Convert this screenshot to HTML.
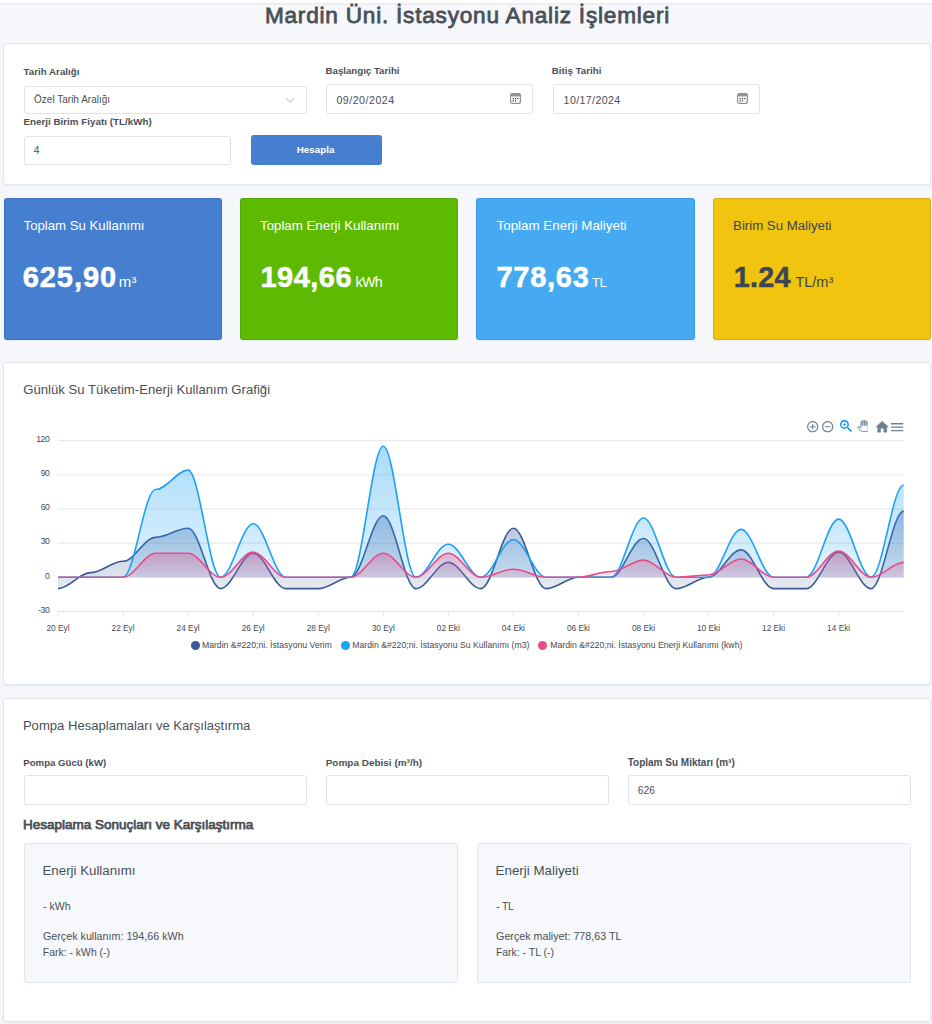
<!DOCTYPE html>
<html lang="tr">
<head>
<meta charset="utf-8">
<title>Mardin Üni. İstasyonu Analiz İşlemleri</title>
<style>
*{box-sizing:border-box;margin:0;padding:0}
html,body{width:932px;height:1024px;overflow:hidden}
body{background:#f5f7fb;font-family:"Liberation Sans",sans-serif;color:#495057;position:relative}
.topbar{position:absolute;left:0;top:0;width:932px;height:5px;background:#fff;border-bottom:2px solid #ebeef4}
.t{position:absolute;white-space:pre}
.card{position:absolute;background:#fff;border:1px solid #e1e5ec;border-radius:3px;box-shadow:0 1px 2px rgba(0,0,0,.05)}
.inp{position:absolute;background:#fff;border:1px solid #dfe3ea;border-radius:3px}
.sub{position:absolute;background:#f7f8fb;border:1px solid #e1e5ec;border-radius:3px}
.btn{position:absolute;background:#467fcf;border-radius:3px}
.stat{position:absolute;border-radius:3px;border:1px solid rgba(0,40,100,.12);box-shadow:0 1px 2px rgba(0,0,0,.05)}
svg{position:absolute;overflow:visible}
</style>
</head>
<body>
<div class="topbar"></div>
<div class="t" style="left:264.90px;top:6.27px;font-size:22.6px;line-height:20px;color:#495057;letter-spacing:0.78px;-webkit-text-stroke:0.8px #495057;">Mardin Üni. İstasyonu Analiz İşlemleri</div>
<div class="card" style="left:3px;top:43px;width:928px;height:142px;"></div>
<div class="t" style="left:23.60px;top:61.62px;font-size:9.75px;line-height:20px;color:#495057;font-weight:bold;">Tarih Aralığı</div>
<div class="inp" style="left:24px;top:86px;width:283px;height:28px;"></div>
<div class="t" style="left:34.10px;top:89.83px;font-size:10.0px;line-height:20px;color:#495057;">Özel Tarih Aralığı</div>
<svg style="left:285px;top:97px" width="10" height="7" viewBox="0 0 10 7"><path d="M1.2 1.4 L5 5.2 L8.8 1.4" fill="none" stroke="#c3c7cd" stroke-width="1.2"/></svg>
<div class="t" style="left:325.60px;top:61.05px;font-size:9.67px;line-height:20px;color:#495057;font-weight:bold;">Başlangıç Tarihi</div>
<div class="inp" style="left:326px;top:84px;width:207px;height:30px;"></div>
<div class="t" style="left:336.40px;top:89.73px;font-size:10.6px;line-height:20px;color:#495057;letter-spacing:0.52px;">09/20/2024</div>
<div class="t" style="left:551.70px;top:61.01px;font-size:9.78px;line-height:20px;color:#495057;font-weight:bold;">Bitiş Tarihi</div>
<div class="inp" style="left:553px;top:84px;width:207px;height:30px;"></div>
<div class="t" style="left:563.60px;top:89.73px;font-size:10.6px;line-height:20px;color:#495057;letter-spacing:0.4px;">10/17/2024</div>
<svg style="left:510px;top:93px" width="11" height="11" viewBox="0 0 11 11"><rect x="0.6" y="0.6" width="9.8" height="9.8" rx="2" fill="#fff" stroke="#8f8f8f" stroke-width="1.2"/><rect x="0.6" y="0.6" width="9.8" height="2.8" rx="1.5" fill="#919191"/><g fill="#333"><rect x="2.6" y="5" width="1.2" height="1.2"/><rect x="4.9" y="5" width="1.2" height="1.2"/><rect x="7.2" y="5" width="1.2" height="1.2"/><rect x="2.6" y="7.2" width="1.2" height="1.2"/><rect x="4.9" y="7.2" width="1.2" height="1.2"/></g></svg>
<svg style="left:737px;top:93px" width="11" height="11" viewBox="0 0 11 11"><rect x="0.6" y="0.6" width="9.8" height="9.8" rx="2" fill="#fff" stroke="#8f8f8f" stroke-width="1.2"/><rect x="0.6" y="0.6" width="9.8" height="2.8" rx="1.5" fill="#919191"/><g fill="#333"><rect x="2.6" y="5" width="1.2" height="1.2"/><rect x="4.9" y="5" width="1.2" height="1.2"/><rect x="7.2" y="5" width="1.2" height="1.2"/><rect x="2.6" y="7.2" width="1.2" height="1.2"/><rect x="4.9" y="7.2" width="1.2" height="1.2"/></g></svg>
<div class="t" style="left:23.40px;top:112.19px;font-size:9.83px;line-height:20px;color:#495057;font-weight:bold;">Enerji Birim Fiyatı (TL/kWh)</div>
<div class="inp" style="left:24px;top:136px;width:207px;height:29px;"></div>
<div class="t" style="left:33.70px;top:140.73px;font-size:10.3px;line-height:20px;color:#495057;">4</div>
<div class="btn" style="left:250.5px;top:135px;width:131.5px;height:30px;"></div>
<div class="t" style="left:296.80px;top:140.20px;font-size:9.8px;line-height:20px;color:#fff;font-weight:bold;">Hesapla</div>
<div class="stat" style="left:4px;top:198px;width:218px;height:142px;background:#467fcf;"></div>
<div class="t" style="left:23.60px;top:216.03px;font-size:13.19px;line-height:20px;color:#fff;">Toplam Su Kullanımı</div>
<div class="t" style="left:22.70px;top:267.25px;font-size:29.0px;line-height:20px;color:#fff;font-weight:bold;letter-spacing:0.95px;-webkit-text-stroke:0.5px #fff;">625,90</div>
<div class="t" style="left:118.80px;top:272.10px;font-size:15.0px;line-height:20px;color:#fff;letter-spacing:0.1px;">m³</div>
<div class="stat" style="left:240px;top:198px;width:218px;height:142px;background:#5eba00;"></div>
<div class="t" style="left:260.00px;top:216.00px;font-size:13.29px;line-height:20px;color:#fff;">Toplam Enerji Kullanımı</div>
<div class="t" style="left:260.40px;top:267.25px;font-size:29.0px;line-height:20px;color:#fff;font-weight:bold;letter-spacing:0.5px;-webkit-text-stroke:0.5px #fff;">194,66</div>
<div class="t" style="left:355.40px;top:272.31px;font-size:14.4px;line-height:20px;color:#fff;letter-spacing:-0.7px;">kWh</div>
<div class="stat" style="left:476px;top:198px;width:219px;height:142px;background:#45aaf2;"></div>
<div class="t" style="left:496.50px;top:215.96px;font-size:13.38px;line-height:20px;color:#fff;">Toplam Enerji Maliyeti</div>
<div class="t" style="left:496.40px;top:267.25px;font-size:29.0px;line-height:20px;color:#fff;font-weight:bold;letter-spacing:0.75px;-webkit-text-stroke:0.5px #fff;">778,63</div>
<div class="t" style="left:591.80px;top:272.59px;font-size:13.6px;line-height:20px;color:#fff;letter-spacing:-0.5px;">TL</div>
<div class="stat" style="left:713px;top:198px;width:218px;height:142px;background:#f1c40f;"></div>
<div class="t" style="left:733.10px;top:216.02px;font-size:13.22px;line-height:20px;color:#3d4552;">Birim Su Maliyeti</div>
<div class="t" style="left:733.80px;top:267.36px;font-size:28.7px;line-height:20px;color:#3d4552;font-weight:bold;letter-spacing:0.3px;-webkit-text-stroke:0.5px #3d4552;">1.24</div>
<div class="t" style="left:795.40px;top:272.28px;font-size:14.5px;line-height:20px;color:#3d4552;">TL/m³</div>
<div class="card" style="left:3px;top:362px;width:928px;height:323px;"></div>
<div class="t" style="left:23.20px;top:379.74px;font-size:13.17px;line-height:20px;color:#495057;">Günlük Su Tüketim-Enerji Kullanım Grafiği</div>
<svg style="left:0;top:0" width="932" height="1024" viewBox="0 0 932 1024">
<defs>
<linearGradient id="g_verim" gradientUnits="userSpaceOnUse" x1="0" y1="511.2" x2="0" y2="588.6"><stop offset="0" stop-color="#3b5998" stop-opacity="0.38"/><stop offset="1" stop-color="#3b5998" stop-opacity="0.13"/></linearGradient>
<linearGradient id="g_water" gradientUnits="userSpaceOnUse" x1="0" y1="446.2" x2="0" y2="577.2"><stop offset="0" stop-color="#1da1f2" stop-opacity="0.38"/><stop offset="1" stop-color="#1da1f2" stop-opacity="0.13"/></linearGradient>
<linearGradient id="g_energy" gradientUnits="userSpaceOnUse" x1="0" y1="551.0" x2="0" y2="577.2"><stop offset="0" stop-color="#ea4c89" stop-opacity="0.38"/><stop offset="1" stop-color="#ea4c89" stop-opacity="0.13"/></linearGradient>
</defs>
<line x1="58.0" x2="903.8" y1="440.55" y2="440.55" stroke="#eaeaea" stroke-width="1.15"/>
<line x1="58.0" x2="903.8" y1="474.72" y2="474.72" stroke="#eaeaea" stroke-width="1.15"/>
<line x1="58.0" x2="903.8" y1="508.89" y2="508.89" stroke="#eaeaea" stroke-width="1.15"/>
<line x1="58.0" x2="903.8" y1="543.06" y2="543.06" stroke="#eaeaea" stroke-width="1.15"/>
<line x1="58.0" x2="903.8" y1="577.23" y2="577.23" stroke="#eaeaea" stroke-width="1.15"/>
<line x1="58.0" x2="903.8" y1="611.4" y2="611.4" stroke="#e0e0e0" stroke-width="1"/>
<line x1="58.0" x2="58.0" y1="611.40" y2="616.70" stroke="#e6e6e6" stroke-width="1"/>
<line x1="123.054" x2="123.054" y1="611.40" y2="616.70" stroke="#e6e6e6" stroke-width="1"/>
<line x1="188.108" x2="188.108" y1="611.40" y2="616.70" stroke="#e6e6e6" stroke-width="1"/>
<line x1="253.162" x2="253.162" y1="611.40" y2="616.70" stroke="#e6e6e6" stroke-width="1"/>
<line x1="318.216" x2="318.216" y1="611.40" y2="616.70" stroke="#e6e6e6" stroke-width="1"/>
<line x1="383.27" x2="383.27" y1="611.40" y2="616.70" stroke="#e6e6e6" stroke-width="1"/>
<line x1="448.324" x2="448.324" y1="611.40" y2="616.70" stroke="#e6e6e6" stroke-width="1"/>
<line x1="513.378" x2="513.378" y1="611.40" y2="616.70" stroke="#e6e6e6" stroke-width="1"/>
<line x1="578.432" x2="578.432" y1="611.40" y2="616.70" stroke="#e6e6e6" stroke-width="1"/>
<line x1="643.486" x2="643.486" y1="611.40" y2="616.70" stroke="#e6e6e6" stroke-width="1"/>
<line x1="708.54" x2="708.54" y1="611.40" y2="616.70" stroke="#e6e6e6" stroke-width="1"/>
<line x1="773.594" x2="773.594" y1="611.40" y2="616.70" stroke="#e6e6e6" stroke-width="1"/>
<line x1="838.648" x2="838.648" y1="611.40" y2="616.70" stroke="#e6e6e6" stroke-width="1"/>
<path d="M58.00 588.62C69.38 588.62 79.14 572.67 90.53 572.67C101.91 572.67 111.67 561.28 123.05 561.28C134.44 561.28 144.20 537.37 155.58 537.37C166.97 537.37 176.72 528.25 188.11 528.25C199.49 528.25 209.25 588.62 220.63 588.62C232.02 588.62 241.78 553.31 253.16 553.31C264.55 553.31 274.30 588.62 285.69 588.62C297.07 588.62 306.83 588.62 318.22 588.62C329.60 588.62 339.36 577.23 350.74 577.23C362.13 577.23 371.89 515.72 383.27 515.72C394.65 515.72 404.41 588.62 415.80 588.62C427.18 588.62 436.94 562.42 448.32 562.42C459.71 562.42 469.47 588.62 480.85 588.62C492.24 588.62 501.99 528.25 513.38 528.25C524.76 528.25 534.52 588.62 545.90 588.62C557.29 588.62 567.05 577.23 578.43 577.23C589.82 577.23 599.57 577.23 610.96 577.23C622.34 577.23 632.10 538.50 643.49 538.50C654.87 538.50 664.63 588.62 676.01 588.62C687.40 588.62 697.16 577.23 708.54 577.23C719.92 577.23 729.68 549.89 741.07 549.89C752.45 549.89 762.21 588.62 773.59 588.62C784.98 588.62 794.74 588.62 806.12 588.62C817.51 588.62 827.26 552.17 838.65 552.17C850.03 552.17 859.79 588.62 871.18 588.62C882.56 588.62 892.32 511.17 903.70 511.17L903.70 577.23L58.00 577.23Z" fill="url(#g_verim)" stroke="none"/>
<path d="M58.00 588.62C69.38 588.62 79.14 572.67 90.53 572.67C101.91 572.67 111.67 561.28 123.05 561.28C134.44 561.28 144.20 537.37 155.58 537.37C166.97 537.37 176.72 528.25 188.11 528.25C199.49 528.25 209.25 588.62 220.63 588.62C232.02 588.62 241.78 553.31 253.16 553.31C264.55 553.31 274.30 588.62 285.69 588.62C297.07 588.62 306.83 588.62 318.22 588.62C329.60 588.62 339.36 577.23 350.74 577.23C362.13 577.23 371.89 515.72 383.27 515.72C394.65 515.72 404.41 588.62 415.80 588.62C427.18 588.62 436.94 562.42 448.32 562.42C459.71 562.42 469.47 588.62 480.85 588.62C492.24 588.62 501.99 528.25 513.38 528.25C524.76 528.25 534.52 588.62 545.90 588.62C557.29 588.62 567.05 577.23 578.43 577.23C589.82 577.23 599.57 577.23 610.96 577.23C622.34 577.23 632.10 538.50 643.49 538.50C654.87 538.50 664.63 588.62 676.01 588.62C687.40 588.62 697.16 577.23 708.54 577.23C719.92 577.23 729.68 549.89 741.07 549.89C752.45 549.89 762.21 588.62 773.59 588.62C784.98 588.62 794.74 588.62 806.12 588.62C817.51 588.62 827.26 552.17 838.65 552.17C850.03 552.17 859.79 588.62 871.18 588.62C882.56 588.62 892.32 511.17 903.70 511.17" fill="none" stroke="#3b5998" stroke-width="1.6" stroke-linecap="butt"/>
<path d="M58.00 577.23C69.38 577.23 79.14 577.23 90.53 577.23C101.91 577.23 111.67 577.23 123.05 577.23C134.44 577.23 144.20 489.53 155.58 489.53C166.97 489.53 176.72 470.16 188.11 470.16C199.49 470.16 209.25 577.23 220.63 577.23C232.02 577.23 241.78 523.70 253.16 523.70C264.55 523.70 274.30 577.23 285.69 577.23C297.07 577.23 306.83 577.23 318.22 577.23C329.60 577.23 339.36 577.23 350.74 577.23C362.13 577.23 371.89 446.25 383.27 446.25C394.65 446.25 404.41 577.23 415.80 577.23C427.18 577.23 436.94 544.20 448.32 544.20C459.71 544.20 469.47 577.23 480.85 577.23C492.24 577.23 501.99 539.64 513.38 539.64C524.76 539.64 534.52 577.23 545.90 577.23C557.29 577.23 567.05 577.23 578.43 577.23C589.82 577.23 599.57 577.23 610.96 577.23C622.34 577.23 632.10 518.00 643.49 518.00C654.87 518.00 664.63 577.23 676.01 577.23C687.40 577.23 697.16 577.23 708.54 577.23C719.92 577.23 729.68 529.39 741.07 529.39C752.45 529.39 762.21 577.23 773.59 577.23C784.98 577.23 794.74 577.23 806.12 577.23C817.51 577.23 827.26 519.14 838.65 519.14C850.03 519.14 859.79 577.23 871.18 577.23C882.56 577.23 892.32 484.97 903.70 484.97L903.70 577.23L58.00 577.23Z" fill="url(#g_water)" stroke="none"/>
<path d="M58.00 577.23C69.38 577.23 79.14 577.23 90.53 577.23C101.91 577.23 111.67 577.23 123.05 577.23C134.44 577.23 144.20 489.53 155.58 489.53C166.97 489.53 176.72 470.16 188.11 470.16C199.49 470.16 209.25 577.23 220.63 577.23C232.02 577.23 241.78 523.70 253.16 523.70C264.55 523.70 274.30 577.23 285.69 577.23C297.07 577.23 306.83 577.23 318.22 577.23C329.60 577.23 339.36 577.23 350.74 577.23C362.13 577.23 371.89 446.25 383.27 446.25C394.65 446.25 404.41 577.23 415.80 577.23C427.18 577.23 436.94 544.20 448.32 544.20C459.71 544.20 469.47 577.23 480.85 577.23C492.24 577.23 501.99 539.64 513.38 539.64C524.76 539.64 534.52 577.23 545.90 577.23C557.29 577.23 567.05 577.23 578.43 577.23C589.82 577.23 599.57 577.23 610.96 577.23C622.34 577.23 632.10 518.00 643.49 518.00C654.87 518.00 664.63 577.23 676.01 577.23C687.40 577.23 697.16 577.23 708.54 577.23C719.92 577.23 729.68 529.39 741.07 529.39C752.45 529.39 762.21 577.23 773.59 577.23C784.98 577.23 794.74 577.23 806.12 577.23C817.51 577.23 827.26 519.14 838.65 519.14C850.03 519.14 859.79 577.23 871.18 577.23C882.56 577.23 892.32 484.97 903.70 484.97" fill="none" stroke="#1da1f2" stroke-width="1.6" stroke-linecap="butt"/>
<path d="M58.00 577.23C69.38 577.23 79.14 577.23 90.53 577.23C101.91 577.23 111.67 577.23 123.05 577.23C134.44 577.23 144.20 553.31 155.58 553.31C166.97 553.31 176.72 553.31 188.11 553.31C199.49 553.31 209.25 577.23 220.63 577.23C232.02 577.23 241.78 552.17 253.16 552.17C264.55 552.17 274.30 577.23 285.69 577.23C297.07 577.23 306.83 577.23 318.22 577.23C329.60 577.23 339.36 577.23 350.74 577.23C362.13 577.23 371.89 553.31 383.27 553.31C394.65 553.31 404.41 577.23 415.80 577.23C427.18 577.23 436.94 553.31 448.32 553.31C459.71 553.31 469.47 577.23 480.85 577.23C492.24 577.23 501.99 569.26 513.38 569.26C524.76 569.26 534.52 577.23 545.90 577.23C557.29 577.23 567.05 577.23 578.43 577.23C589.82 577.23 599.57 571.53 610.96 571.53C622.34 571.53 632.10 560.14 643.49 560.14C654.87 560.14 664.63 577.23 676.01 577.23C687.40 577.23 697.16 574.95 708.54 574.95C719.92 574.95 729.68 559.01 741.07 559.01C752.45 559.01 762.21 577.23 773.59 577.23C784.98 577.23 794.74 577.23 806.12 577.23C817.51 577.23 827.26 551.03 838.65 551.03C850.03 551.03 859.79 577.23 871.18 577.23C882.56 577.23 892.32 562.42 903.70 562.42L903.70 577.23L58.00 577.23Z" fill="url(#g_energy)" stroke="none"/>
<path d="M58.00 577.23C69.38 577.23 79.14 577.23 90.53 577.23C101.91 577.23 111.67 577.23 123.05 577.23C134.44 577.23 144.20 553.31 155.58 553.31C166.97 553.31 176.72 553.31 188.11 553.31C199.49 553.31 209.25 577.23 220.63 577.23C232.02 577.23 241.78 552.17 253.16 552.17C264.55 552.17 274.30 577.23 285.69 577.23C297.07 577.23 306.83 577.23 318.22 577.23C329.60 577.23 339.36 577.23 350.74 577.23C362.13 577.23 371.89 553.31 383.27 553.31C394.65 553.31 404.41 577.23 415.80 577.23C427.18 577.23 436.94 553.31 448.32 553.31C459.71 553.31 469.47 577.23 480.85 577.23C492.24 577.23 501.99 569.26 513.38 569.26C524.76 569.26 534.52 577.23 545.90 577.23C557.29 577.23 567.05 577.23 578.43 577.23C589.82 577.23 599.57 571.53 610.96 571.53C622.34 571.53 632.10 560.14 643.49 560.14C654.87 560.14 664.63 577.23 676.01 577.23C687.40 577.23 697.16 574.95 708.54 574.95C719.92 574.95 729.68 559.01 741.07 559.01C752.45 559.01 762.21 577.23 773.59 577.23C784.98 577.23 794.74 577.23 806.12 577.23C817.51 577.23 827.26 551.03 838.65 551.03C850.03 551.03 859.79 577.23 871.18 577.23C882.56 577.23 892.32 562.42 903.70 562.42" fill="none" stroke="#ea4c89" stroke-width="1.6" stroke-linecap="butt"/>
</svg>
<div class="t" style="left:0.00px;top:428.84px;font-size:8.7px;line-height:20px;color:#434a54;letter-spacing:-0.35px;width:49.6px;text-align:right;">120</div>
<div class="t" style="left:0.00px;top:463.01px;font-size:8.7px;line-height:20px;color:#434a54;letter-spacing:-0.35px;width:49.6px;text-align:right;">90</div>
<div class="t" style="left:0.00px;top:497.18px;font-size:8.7px;line-height:20px;color:#434a54;letter-spacing:-0.35px;width:49.6px;text-align:right;">60</div>
<div class="t" style="left:0.00px;top:531.35px;font-size:8.7px;line-height:20px;color:#434a54;letter-spacing:-0.35px;width:49.6px;text-align:right;">30</div>
<div class="t" style="left:0.00px;top:565.52px;font-size:8.7px;line-height:20px;color:#434a54;letter-spacing:-0.35px;width:49.6px;text-align:right;">0</div>
<div class="t" style="left:0.00px;top:599.69px;font-size:8.7px;line-height:20px;color:#434a54;letter-spacing:-0.35px;width:49.6px;text-align:right;">-30</div>
<div class="t" style="left:28.00px;top:617.82px;font-size:8.3px;line-height:20px;color:#434a54;width:60px;text-align:center;">20 Eyl</div>
<div class="t" style="left:93.05px;top:617.82px;font-size:8.3px;line-height:20px;color:#434a54;width:60px;text-align:center;">22 Eyl</div>
<div class="t" style="left:158.11px;top:617.82px;font-size:8.3px;line-height:20px;color:#434a54;width:60px;text-align:center;">24 Eyl</div>
<div class="t" style="left:223.16px;top:617.82px;font-size:8.3px;line-height:20px;color:#434a54;width:60px;text-align:center;">26 Eyl</div>
<div class="t" style="left:288.22px;top:617.82px;font-size:8.3px;line-height:20px;color:#434a54;width:60px;text-align:center;">28 Eyl</div>
<div class="t" style="left:353.27px;top:617.82px;font-size:8.3px;line-height:20px;color:#434a54;width:60px;text-align:center;">30 Eyl</div>
<div class="t" style="left:418.32px;top:617.82px;font-size:8.3px;line-height:20px;color:#434a54;width:60px;text-align:center;">02 Eki</div>
<div class="t" style="left:483.38px;top:617.82px;font-size:8.3px;line-height:20px;color:#434a54;width:60px;text-align:center;">04 Eki</div>
<div class="t" style="left:548.43px;top:617.82px;font-size:8.3px;line-height:20px;color:#434a54;width:60px;text-align:center;">06 Eki</div>
<div class="t" style="left:613.49px;top:617.82px;font-size:8.3px;line-height:20px;color:#434a54;width:60px;text-align:center;">08 Eki</div>
<div class="t" style="left:678.54px;top:617.82px;font-size:8.3px;line-height:20px;color:#434a54;width:60px;text-align:center;">10 Eki</div>
<div class="t" style="left:743.59px;top:617.82px;font-size:8.3px;line-height:20px;color:#434a54;width:60px;text-align:center;">12 Eki</div>
<div class="t" style="left:808.65px;top:617.82px;font-size:8.3px;line-height:20px;color:#434a54;width:60px;text-align:center;">14 Eki</div>
<div style="position:absolute;left:190.70000000000002px;top:640.6px;width:9.2px;height:9.2px;border-radius:50%;background:#3b5998"></div>
<div class="t" style="left:201.90px;top:635.19px;font-size:8.7px;line-height:20px;color:#434a54;">Mardin &amp;#220;ni. İstasyonu Verim</div>
<div style="position:absolute;left:340.5px;top:640.6px;width:9.2px;height:9.2px;border-radius:50%;background:#1da1f2"></div>
<div class="t" style="left:352.20px;top:635.19px;font-size:8.7px;line-height:20px;color:#434a54;">Mardin &amp;#220;ni. İstasyonu Su Kullanımı (m3)</div>
<div style="position:absolute;left:537.8px;top:640.6px;width:9.2px;height:9.2px;border-radius:50%;background:#ea4c89"></div>
<div class="t" style="left:550.20px;top:635.19px;font-size:8.7px;line-height:20px;color:#434a54;">Mardin &amp;#220;ni. İstasyonu Enerji Kullanımı (kwh)</div>
<svg style="left:806.08px;top:419.68px;" width="13.44" height="13.44" viewBox="0 0 24 24"><path fill="#6e8192" d="M13 7h-2v4H7v2h4v4h2v-4h4v-2h-4V7zm-1-5C6.48 2 2 6.48 2 12s4.48 10 10 10 10-4.48 10-10S17.52 2 12 2zm0 18c-4.41 0-8-3.59-8-8s3.59-8 8-8 8 3.59 8 8-3.59 8-8 8z"/></svg>
<svg style="left:821.48px;top:419.68px;" width="13.44" height="13.44" viewBox="0 0 24 24"><path fill="#6e8192" d="M7 11v2h10v-2H7zm5-9C6.48 2 2 6.48 2 12s4.48 10 10 10 10-4.48 10-10S17.52 2 12 2zm0 18c-4.41 0-8-3.59-8-8s3.59-8 8-8 8 3.59 8 8-3.59 8-8 8z"/></svg>
<svg style="left:838.04px;top:418.14px;" width="16.32" height="16.32" viewBox="0 0 24 24"><path fill="#008ffb" d="M15.5 14h-.79l-.28-.27C15.41 12.59 16 11.11 16 9.5 16 5.91 13.09 3 9.5 3S3 5.91 3 9.5 5.91 16 9.5 16c1.61 0 3.09-.59 4.23-1.57l.27.28v.79l5 4.99L20.49 19l-4.99-5zm-6 0C7.01 14 5 11.99 5 9.5S7.01 5 9.5 5 14 7.01 14 9.5 11.99 14 9.5 14z"/><path fill="#008ffb" d="M12 10h-2v2H9v-2H7V9h2V7h1v2h2v1z"/></svg>
<svg style="left:856.5px;top:420.3px;overflow:hidden" width="11.7" height="12.19" viewBox="0 0 24 25"><path fill="#fff" stroke="#6e8192" stroke-width="2" d="M23 5.5V20c0 2.2-1.8 4-4 4h-7.3c-1.08 0-2.1-.43-2.850-1.190L1 14.830s1.260-1.230 1.300-1.250c.22-.19.49-.29.79-.29.22 0 .42.06.6.16.04.01 4.310 2.460 4.310 2.460V4c0-.83.67-1.500 1.500-1.500S11 3.170 11 4v7h1V1.500c0-.83.67-1.500 1.500-1.500S15 .67 15 1.500V11h1V2.500c0-.83.67-1.500 1.500-1.500s1.500.67 1.500 1.500V11h1V5.500c0-.83.67-1.500 1.500-1.500s1.500.67 1.500 1.500z"/></svg>
<svg style="left:873.54px;top:419.04px;" width="16.32" height="16.32" viewBox="0 0 24 24"><path fill="#6e8192" d="M10 20v-6h4v6h5v-8h3L12 3 2 12h3v8z"/></svg>
<svg style="left:889.14px;top:418.84px;" width="16.32" height="16.32" viewBox="0 0 24 24"><path fill="#6e8192" d="M3 18h18v-2H3v2zm0-5h18v-2H3v2zm0-7v2h18V6H3z"/></svg>
<div class="card" style="left:3px;top:698px;width:928px;height:323.5px;"></div>
<div class="t" style="left:22.90px;top:715.96px;font-size:13.09px;line-height:20px;color:#495057;">Pompa Hesaplamaları ve Karşılaştırma</div>
<div class="t" style="left:23.30px;top:752.86px;font-size:9.65px;line-height:20px;color:#495057;font-weight:bold;">Pompa Gücü (kW)</div>
<div class="inp" style="left:24px;top:775px;width:283px;height:30px;"></div>
<div class="t" style="left:325.70px;top:752.74px;font-size:9.98px;line-height:20px;color:#495057;font-weight:bold;">Pompa Debisi (m³/h)</div>
<div class="inp" style="left:326px;top:775px;width:283px;height:30px;"></div>
<div class="t" style="left:627.70px;top:752.74px;font-size:10.0px;line-height:20px;color:#495057;font-weight:bold;">Toplam Su Miktarı (m³)</div>
<div class="inp" style="left:628px;top:775px;width:283px;height:30px;"></div>
<div class="t" style="left:637.80px;top:780.63px;font-size:10.3px;line-height:20px;color:#495057;">626</div>
<div class="t" style="left:23.00px;top:815.22px;font-size:13.5px;line-height:20px;color:#495057;-webkit-text-stroke:0.75px #495057;">Hesaplama Sonuçları ve Karşılaştırma</div>
<div class="sub" style="left:24px;top:843px;width:434px;height:139.5px;"></div>
<div class="sub" style="left:476.5px;top:843px;width:434.5px;height:139.5px;"></div>
<div class="t" style="left:42.50px;top:860.70px;font-size:13.29px;line-height:20px;color:#495057;">Enerji Kullanımı</div>
<div class="t" style="left:43.10px;top:896.06px;font-size:10.5px;line-height:20px;color:#495057;">- kWh</div>
<div class="t" style="left:43.00px;top:926.18px;font-size:10.73px;line-height:20px;color:#495057;">Gerçek kullanım: 194,66 kWh</div>
<div class="t" style="left:42.80px;top:943.38px;font-size:10.44px;line-height:20px;color:#495057;">Fark: - kWh (-)</div>
<div class="t" style="left:495.60px;top:860.67px;font-size:13.35px;line-height:20px;color:#495057;">Enerji Maliyeti</div>
<div class="t" style="left:496.20px;top:896.06px;font-size:10.5px;line-height:20px;color:#495057;letter-spacing:-0.25px;">- TL</div>
<div class="t" style="left:496.10px;top:926.19px;font-size:10.71px;line-height:20px;color:#495057;">Gerçek maliyet: 778,63 TL</div>
<div class="t" style="left:495.90px;top:943.38px;font-size:10.46px;line-height:20px;color:#495057;">Fark: - TL (-)</div>
</body>
</html>
